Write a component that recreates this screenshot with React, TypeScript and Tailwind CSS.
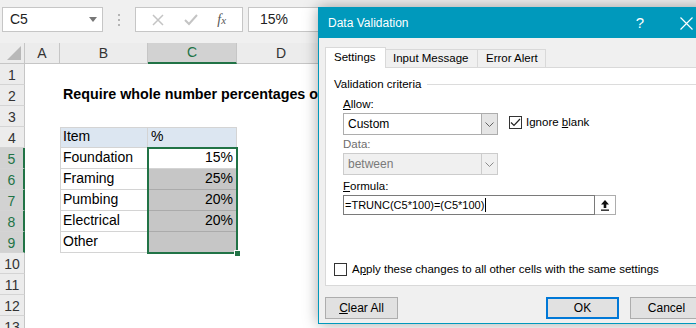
import React from "react";

const sans = "font-['Liberation_Sans',Arial,sans-serif]";

const items: { row: number; name: string; pct: string }[] = [
  { row: 5, name: "Foundation", pct: "15%" },
  { row: 6, name: "Framing", pct: "25%" },
  { row: 7, name: "Pumbing", pct: "20%" },
  { row: 8, name: "Electrical", pct: "20%" },
  { row: 9, name: "Other", pct: "" },
];

const Chevron: React.FC<{ color?: string }> = ({ color = "#606060" }) => (
  <svg width="9" height="5" viewBox="0 0 9 5">
    <path d="M0.5 0.5 L4.5 4.5 L8.5 0.5" fill="none" stroke={color} strokeWidth="1" />
  </svg>
);

const TopBar: React.FC = () => (
  <div className="h-[43px] bg-[#f0f0f0] flex items-start pt-[7px] pl-[2px]">
    <div className="w-[101px] h-[25px] bg-white border border-[#c6c6c6] flex items-center justify-between pl-[7px] pr-[5px] text-[14px] text-[#222]">
      <span>C5</span>
      <svg width="8" height="5" viewBox="0 0 8 5">
        <path d="M0 0 H8 L4 5 Z" fill="#777" />
      </svg>
    </div>
    <div className="w-[32px] h-[25px] flex flex-col items-center justify-center gap-[3px]">
      <span className="w-[2px] h-[2px] bg-[#b4b4b4]" />
      <span className="w-[2px] h-[2px] bg-[#b4b4b4]" />
      <span className="w-[2px] h-[2px] bg-[#b4b4b4]" />
    </div>
    <div className="w-[108px] h-[25px] bg-white border border-[#c6c6c6] flex items-center justify-around px-[6px]">
      <svg width="12" height="12" viewBox="0 0 12 12">
        <path d="M1 1 L11 11 M11 1 L1 11" stroke="#c4c4c4" strokeWidth="1.5" />
      </svg>
      <svg width="14" height="12" viewBox="0 0 14 12">
        <path d="M1 6 L5 10 L13 1" fill="none" stroke="#c4c4c4" strokeWidth="2" />
      </svg>
      <span className="font-['Liberation_Serif',serif] italic text-[14px] text-[#555] leading-none">
        f<span className="text-[11px]">x</span>
      </span>
    </div>
    <div className="ml-[5px] flex-1 h-[25px] bg-white border border-[#c6c6c6] flex items-center pl-[11px] text-[14px] text-[#222]">
      15%
    </div>
  </div>
);

const colHead = "h-[21px] border-r border-b border-[#c6c6c6] bg-[#ececec] flex items-center justify-center text-[14px] text-[#333]";

const Sheet: React.FC = () => (
  <div className="relative bg-white">
    <div className="grid grid-cols-[25px_35px_88px_89px_1fr]">
      <div className={colHead + " items-end justify-end pr-[3px] pb-[3px]"}>
        <svg width="14" height="14" viewBox="0 0 14 14">
          <path d="M14 0 V14 H0 Z" fill="#b8b8b8" />
        </svg>
      </div>
      <div className={colHead}>A</div>
      <div className={colHead}>B</div>
      <div className="h-[21px] border-r border-b-2 border-r-[#c6c6c6] border-b-[#217346] bg-[#d2d2d2] flex items-center justify-center text-[14px] text-[#217346]">
        C
      </div>
      <div className={colHead + " justify-start pl-[39px]"}>D</div>

      {Array.from({ length: 13 }, (_, i) => i + 1).map((r) => {
        const sel = r >= 5 && r <= 9;
        const item = items.find((it) => it.row === r);
        return (
          <React.Fragment key={r}>
            <div
              className={
                "h-[21px] border-b border-[#d4d4d4] flex items-center justify-center pt-[2px] text-[14px] " +
                (sel
                  ? "bg-[#d2d2d2] text-[#217346] border-r-2 border-r-[#217346]"
                  : "bg-[#ececec] text-[#333] border-r border-r-[#c6c6c6]")
              }
            >
              {r}
            </div>
            <div className="h-[21px]" />
            {r === 2 ? (
              <div className="h-[21px] flex items-end pl-[3px] pb-[1px] text-[14.3px] font-bold text-black whitespace-nowrap">
                Require whole number percentages of each item
              </div>
            ) : r === 4 ? (
              <div className="h-[21px] bg-[#dce6f1] border border-[#d4d4d4] flex items-end pl-[2px] text-[14px] text-black">
                Item
              </div>
            ) : item ? (
              <div className="h-[21px] border-x border-b border-[#d4d4d4] flex items-end pl-[2px] text-[14px] text-black">
                {item.name}
              </div>
            ) : (
              <div className="h-[21px]" />
            )}
            {r === 4 ? (
              <div className="h-[21px] bg-[#dce6f1] border-y border-r border-[#d4d4d4] flex items-end pl-[3px] text-[14px] text-black">
                %
              </div>
            ) : item ? (
              <div
                className={
                  "h-[21px] border-b border-r flex items-end justify-end pr-[3px] text-[14px] text-black " +
                  (r === 5 ? "bg-white border-[#d4d4d4]" : "bg-[#c6c6c6] border-[#ababab]")
                }
              >
                {item.pct}
              </div>
            ) : (
              <div className="h-[21px]" />
            )}
            <div className="h-[21px]" />
          </React.Fragment>
        );
      })}
    </div>
    {/* selection C5:C9 */}
    <div className="absolute left-[147px] top-[104px] w-[91px] h-[107px] border-2 border-[#217346] pointer-events-none">
      <div className="absolute right-[-5px] bottom-[-5px] w-[7px] h-[7px] bg-[#217346] border border-white" />
    </div>
  </div>
);

const Check: React.FC<{ checked?: boolean }> = ({ checked }) => (
  <div className="w-[13px] h-[13px] border border-[#333] bg-white flex items-center justify-center shrink-0">
    {checked && (
      <svg width="11" height="9" viewBox="0 0 11 9">
        <path d="M1 4.5 L4 7.5 L10 1" fill="none" stroke="#222" strokeWidth="1.2" />
      </svg>
    )}
  </div>
);

const Btn: React.FC<{ children: React.ReactNode; primary?: boolean }> = ({ children, primary }) => (
  <div
    className={
      "w-[73px] h-[22px] bg-[#e1e1e1] flex items-center justify-center text-[12px] text-black " +
      (primary ? "border-2 border-[#0078d7]" : "border border-[#adadad]")
    }
  >
    {children}
  </div>
);

const Dialog: React.FC = () => (
  <div className={"absolute left-[318px] top-[7px] w-[392px] h-[317px] border border-[#0099bc] bg-[#f0f0f0] shadow-[0_0_14px_rgba(0,0,0,0.35)] flex flex-col text-[11.5px] text-black " + sans}>
    <div className="h-[30px] bg-[#0099bc] flex items-center pl-[9px] text-white text-[12px] shrink-0">
      <span className="flex-1">Data Validation</span>
      <span className="text-[15px] mr-[36px]">?</span>
      <svg width="13" height="13" viewBox="0 0 13 13" className="mr-[16px]">
        <path d="M0.5 0.5 L12.5 12.5 M12.5 0.5 L0.5 12.5" stroke="white" strokeWidth="1.2" />
      </svg>
    </div>
    <div className="px-[6px] flex flex-col flex-1">
      <div className="mt-[8px] flex items-end h-[21px]">
        <div className="relative z-10 -mb-px h-[21px] w-[61px] bg-white border-x border-t border-[#d9d9d9] flex items-center pl-[8px] pb-[1px]">
          Settings
        </div>
        <div className="h-[18px] w-[92px] border-t border-r border-[#d9d9d9] flex items-center pl-[7px]">
          Input Message
        </div>
        <div className="h-[18px] w-[68px] border-t border-r border-[#d9d9d9] flex items-center pl-[8px]">
          Error Alert
        </div>
      </div>
      <div className="h-[219px] bg-white border border-[#d9d9d9] flex flex-col pl-[8px] leading-[14px]">
        <div className="mt-[9px] flex items-center">
          <span>Validation criteria</span>
          <div className="flex-1 h-px bg-[#dcdcdc] ml-[6px]" />
        </div>
        <div className="ml-[9px] flex flex-col">
          <div className="mt-[6px]">
            <span className="underline">A</span>llow:
          </div>
          <div className="mt-[2px] flex items-center">
            <div className="w-[155px] h-[22px] border border-[#adadad] bg-white flex">
              <div className="flex-1 flex items-center pl-[4px] text-[12px]">Custom</div>
              <div className="w-[16px] border-l border-[#adadad] bg-[#e5e5e5] flex items-center justify-center">
                <Chevron />
              </div>
            </div>
            <div className="ml-[11px] mt-[-4px] flex items-center gap-[4px]">
              <Check checked />
              <span>
                Ignore <span className="underline">b</span>lank
              </span>
            </div>
          </div>
          <div className="mt-[2px] text-[#6d6d6d]">Data:</div>
          <div className="mt-[2px] w-[155px] h-[22px] border border-[#cccccc] bg-[#f0f0f0] flex">
            <div className="flex-1 flex items-center pl-[4px] text-[12px] text-[#7a7a7a]">between</div>
            <div className="w-[16px] border-l border-[#cccccc] flex items-center justify-center">
              <Chevron color="#8a8a8a" />
            </div>
          </div>
          <div className="mt-[4px]">
            <span className="underline">F</span>ormula:
          </div>
          <div className="mt-[2px] flex">
            <div className="w-[252px] h-[20px] border border-[#7a7a7a] bg-white flex items-center pl-[1px] text-[11px]">
              <span className="border-r border-black pr-[1px]">=TRUNC(C5*100)=(C5*100)</span>
            </div>
            <div className="w-[21px] h-[20px] border-y border-r border-[#adadad] bg-white flex items-center justify-center">
              <svg width="10" height="12" viewBox="0 0 10 12">
                <path d="M5 1 L9 5.5 H6.3 V9 H3.7 V5.5 H1 Z" fill="#111" />
                <rect x="1" y="10.5" width="8" height="1.3" fill="#111" />
              </svg>
            </div>
          </div>
        </div>
        <div className="mt-auto mb-[9px] flex items-center gap-[5px]">
          <Check />
          <span>
            A<span className="underline">p</span>ply these changes to all other cells with the same settings
          </span>
        </div>
      </div>
      <div className="mt-[11px] flex">
        <Btn>
          <span className="underline">C</span>lear All
        </Btn>
        <div className="flex-1" />
        <Btn primary>OK</Btn>
        <div className="ml-[11px]">
          <Btn>Cancel</Btn>
        </div>
      </div>
    </div>
  </div>
);

export default function App() {
  return (
    <div className={"relative w-[696px] h-[328px] overflow-hidden bg-white " + sans}>
      <TopBar />
      <Sheet />
      <Dialog />
    </div>
  );
}
